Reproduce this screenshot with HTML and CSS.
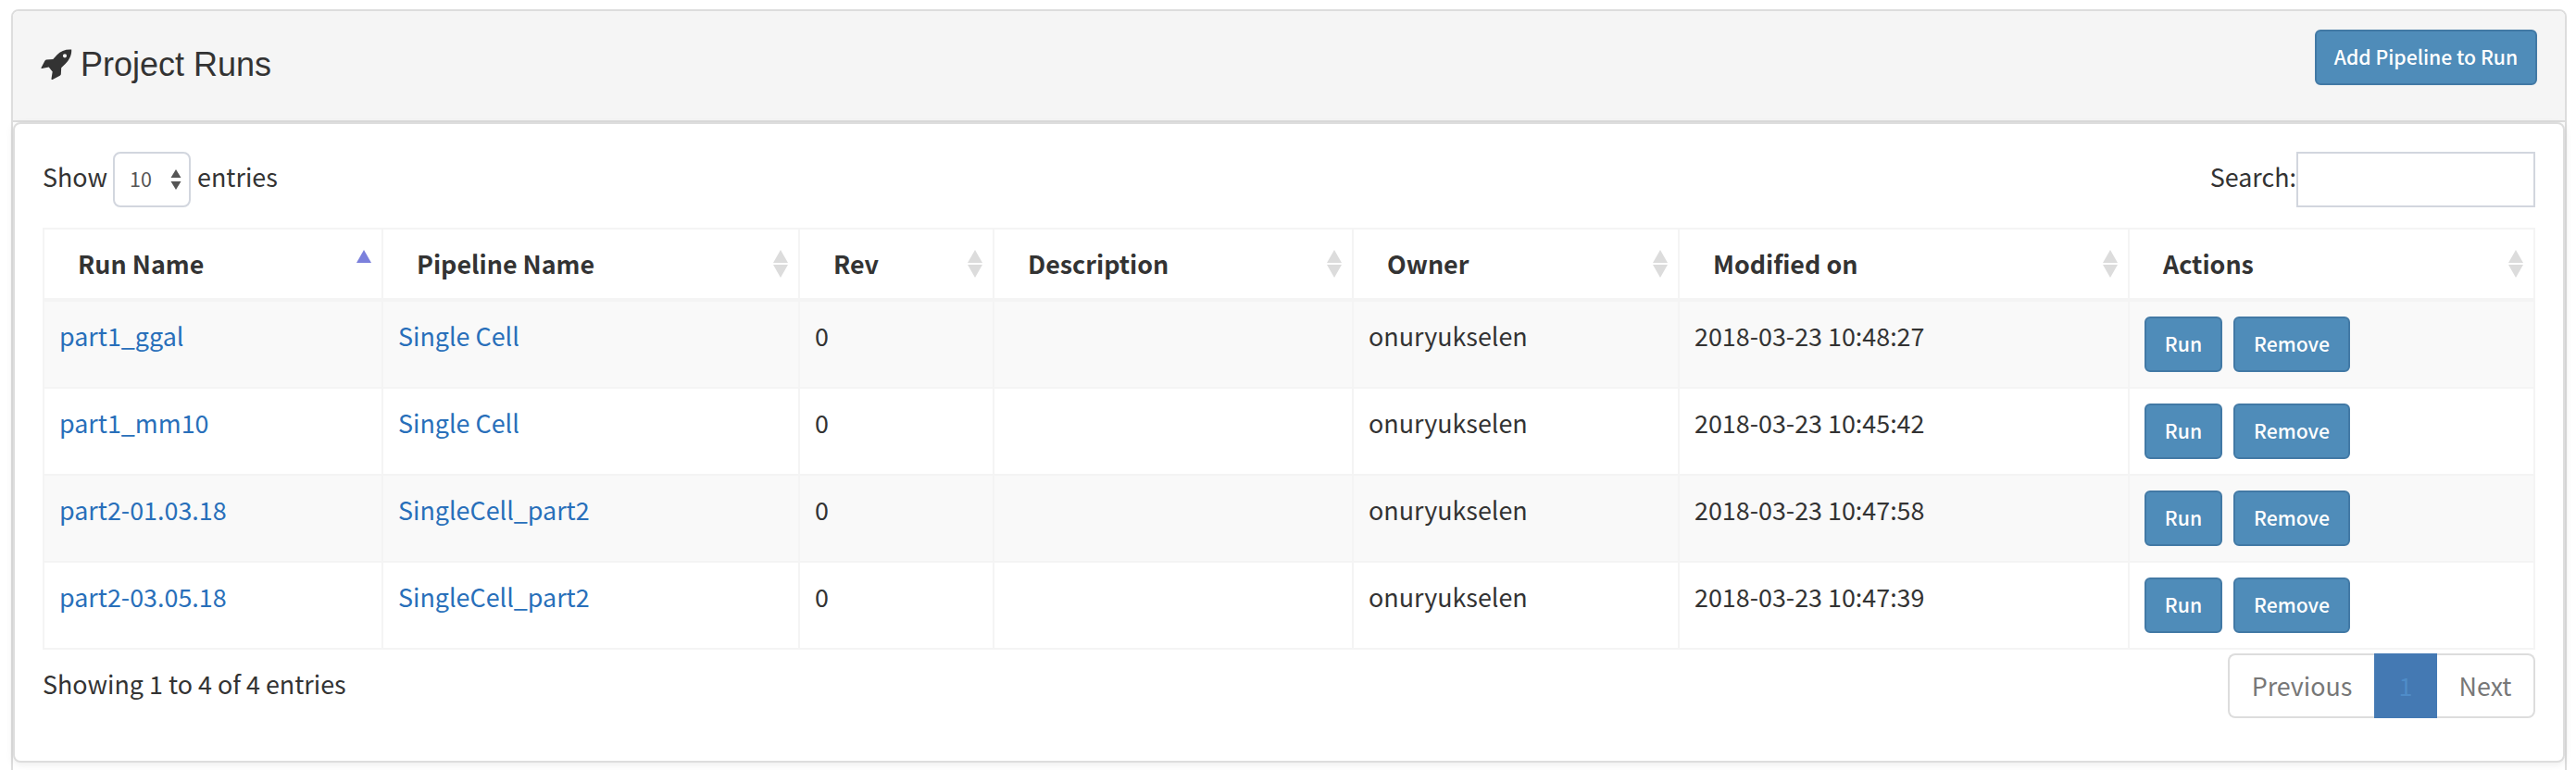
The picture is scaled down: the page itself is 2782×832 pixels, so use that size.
FILE: index.html
```html
<!DOCTYPE html>
<html lang="en">
<head>
<meta charset="utf-8">
<title>Project Runs</title>
<link rel="stylesheet" href="styles.css">
</head>
<body>
<section class="panel">
  <header class="panel-head">
    <svg class="rocket" viewBox="0 0 34 34"><path fill-rule="evenodd" d="M33.2.6C27 .2 21.5 2 17.600 6.200L13.300 11 6 11.600C5.300 11.700 4.800 12.200 4.400 12.800L.5 20.300C.3 20.900.7 21.200 1.300 21.100L8.700 19.600 12.700 24.500 11.500 32C11.400 33 12 33.300 12.700 33L20.700 28.800C21.400 28.400 21.700 28 21.800 27.300L22.200 20.300 26.600 16C31.200 11.500 33.500 6.500 33.200.6ZM26 5.200A2.100 2.100 0 1 1 26 9.400 2.100 2.100 0 0 1 26 5.200Z"/></svg>
    <h3 class="title">Project Runs</h3>
    <button class="btn btn-add">Add Pipeline to Run</button>
  </header>
  <div class="panel-body">
    <div class="toolbar">
      <div class="length"><span class="label">Show</span>
        <div class="select"><span class="value">10</span><svg class="arrows" viewBox="0 0 12 22"><path d="M6 0l5.500 9H.5zM6 22l5.500-9H.5z"/></svg></div>
        <span class="label">entries</span></div>
      <label class="search"><span class="label">Search:</span><input class="search-input" type="text"></label>
    </div>
    <table class="runs">
      <colgroup><col class="c-run"><col class="c-pipe"><col class="c-rev"><col class="c-desc"><col class="c-owner"><col class="c-date"><col class="c-act"></colgroup>
      <thead>
        <tr>
          <th><div class="th">Run Name<svg class="sort asc" viewBox="0 0 16 30"><path d="M8 0l8 14H0z"/></svg></div></th>
          <th><div class="th">Pipeline Name<svg class="sort" viewBox="0 0 16 30"><path d="M8 0l8 14H0zM8 30l8-14H0z"/></svg></div></th>
          <th><div class="th">Rev<svg class="sort" viewBox="0 0 16 30"><path d="M8 0l8 14H0zM8 30l8-14H0z"/></svg></div></th>
          <th><div class="th">Description<svg class="sort" viewBox="0 0 16 30"><path d="M8 0l8 14H0zM8 30l8-14H0z"/></svg></div></th>
          <th><div class="th">Owner<svg class="sort" viewBox="0 0 16 30"><path d="M8 0l8 14H0zM8 30l8-14H0z"/></svg></div></th>
          <th><div class="th">Modified on<svg class="sort" viewBox="0 0 16 30"><path d="M8 0l8 14H0zM8 30l8-14H0z"/></svg></div></th>
          <th><div class="th">Actions<svg class="sort" viewBox="0 0 16 30"><path d="M8 0l8 14H0zM8 30l8-14H0z"/></svg></div></th>
        </tr>
      </thead>
      <tbody>
        <tr><td><a>part1_ggal</a></td><td><a>Single Cell</a></td><td>0</td><td></td><td>onuryukselen</td><td>2018-03-23 10:48:27</td><td class="act"><div class="actions"><button class="btn btn-run">Run</button><button class="btn btn-remove">Remove</button></div></td></tr>
        <tr><td><a>part1_mm10</a></td><td><a>Single Cell</a></td><td>0</td><td></td><td>onuryukselen</td><td>2018-03-23 10:45:42</td><td class="act"><div class="actions"><button class="btn btn-run">Run</button><button class="btn btn-remove">Remove</button></div></td></tr>
        <tr><td><a>part2-01.03.18</a></td><td><a>SingleCell_part2</a></td><td>0</td><td></td><td>onuryukselen</td><td>2018-03-23 10:47:58</td><td class="act"><div class="actions"><button class="btn btn-run">Run</button><button class="btn btn-remove">Remove</button></div></td></tr>
        <tr><td><a>part2-03.05.18</a></td><td><a>SingleCell_part2</a></td><td>0</td><td></td><td>onuryukselen</td><td>2018-03-23 10:47:39</td><td class="act"><div class="actions"><button class="btn btn-run">Run</button><button class="btn btn-remove">Remove</button></div></td></tr>
      </tbody>
    </table>
    <footer class="foot">
      <div class="info">Showing 1 to 4 of 4 entries</div>
      <nav class="pager"><a class="page prev">Previous</a><a class="page current">1</a><a class="page next">Next</a></nav>
    </footer>
  </div>
</section>
</body>
</html>
```
FILE: styles.css
```css
* { box-sizing: border-box; }
body {
  margin: 0;
  height: 832px;
  overflow: hidden;
  padding: 10px 10px 0 12px;
  background: #fff;
  color: #333;
  font: 26.88px/40px "Noto Sans CJK SC", "Noto Sans", sans-serif;
}
.panel {
  height: 860px;
  border: 2px solid #ddd;
  border-radius: 8px;
  box-shadow: 0 2px 2px rgba(0, 0, 0, .05);
}
.panel-head {
  display: flex;
  align-items: flex-start;
  height: 120px;
  padding: 20px 30px 0 30px;
  background: #f5f5f5;
  border-bottom: 2px solid #ddd;
  border-radius: 6px 6px 0 0;
}
.rocket { width: 34px; height: 34px; margin-top: 21px; fill: #333; }
.title {
  margin: 18px 0 0 9px;
  font: 400 36px/40px "Liberation Sans", Arial, sans-serif;
}
.btn {
  height: 60px;
  padding: 0 0 3px;
  border: 2px solid #4279a5;
  border-radius: 6px;
  background: #4f8cb9;
  color: #fff;
  font: 500 21.2px/53px "Noto Sans CJK SC", "Noto Sans", sans-serif;
  text-align: center;
  white-space: nowrap;
}
.btn-add { width: 240px; margin-left: auto; }
.btn-run { width: 84px; }
.btn-remove { width: 126px; }
.btn { padding-bottom: 4px; }
.panel-body {
  height: 692px;
  padding: 30px 30px 0;
  border: 2px solid #ddd;
  border-radius: 8px;
  background: #fff;
  box-shadow: 0 2px 8px rgba(0, 0, 0, .08);
}
.toolbar { display: flex; justify-content: space-between; height: 82px; }
.length, .search { display: flex; height: 60px; }
.label { line-height: 54px; }
.select {
  display: flex;
  align-items: center;
  justify-content: space-between;
  width: 84px;
  height: 60px;
  margin: 0 7px 0 6px;
  padding: 0 8px 0 16px;
  border: 2px solid #d2d6de;
  border-radius: 8px;
  color: #555;
}
.value { font-size: 21.5px; line-height: 54px; padding-bottom: 2px; }
.arrows { width: 12px; height: 22px; fill: #555; }
.search-input { width: 258px; height: 60px; border: 2px solid #d2d6de; border-radius: 0; background: #fff; }
.runs {
  width: 2692px;
  table-layout: fixed;
  border-collapse: separate;
  border-spacing: 0;
  border-top: 2px solid #f4f4f4;
  border-left: 2px solid #f4f4f4;
}
.c-run { width: 366px; }
.c-pipe { width: 450px; }
.c-rev { width: 210px; }
.c-desc { width: 388px; }
.c-owner { width: 352px; }
.c-date { width: 486px; }
.c-act { width: 438px; }
.runs th, .runs td { padding: 0; border-right: 2px solid #f4f4f4; text-align: left; vertical-align: top; }
.runs th { height: 78px; border-bottom: 4px solid #f4f4f4; font-weight: 700; }
.runs td { height: 94px; padding: 17px 0 0 16px; border-bottom: 2px solid #f4f4f4; }
.runs td.act { padding-top: 16px; }
.runs tbody tr:nth-child(odd) { background: #f9f9f9; }
.runs a { color: #286fba; }
.th { display: flex; justify-content: space-between; padding: 17px 11px 0 36px; }
.sort { width: 16px; height: 30px; margin-top: 5px; fill: #dcdcdc; }
.sort.asc { fill: #7b80dc; }
.actions { display: flex; gap: 12px; }
.foot { display: flex; justify-content: space-between; padding-top: 4px; }
.info { line-height: 66px; }
.pager { display: flex; height: 70px; border-radius: 8px; color: #777; line-height: 65px; text-align: center; }
.page { border: 2px solid #ddd; }
.prev { width: 158px; border-right: 0; border-radius: 8px 0 0 8px; }
.current { width: 68px; background: #4479b3; border-color: #4479b3; color: #4f8cc8; }
.next { width: 106px; border-left: 0; border-radius: 0 8px 8px 0; }
```
